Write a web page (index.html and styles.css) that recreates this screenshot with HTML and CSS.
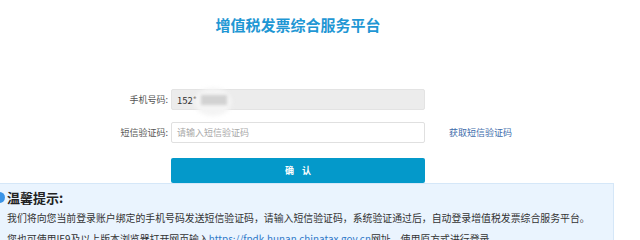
FILE: index.html
```html
<!DOCTYPE html>
<html lang="zh-CN">
<head>
<meta charset="utf-8">
<title>增值税发票综合服务平台</title>
<link rel="stylesheet" href="styles.css">
</head>
<body>
<div class="page">
  <h1 class="title">增值税发票综合服务平台</h1>
  <div class="form">
    <label class="label">手机号码:</label>
    <div class="input input-disabled"><span class="phone">152*</span><span class="blob-halo"></span><span class="blob"></span></div>
    <span></span>
    <label class="label">短信验证码:</label>
    <div class="input"><span class="placeholder">请输入短信验证码</span></div>
    <a class="sms-link">获取短信验证码</a>
    <span></span>
    <button class="btn">确 认</button>
    <span></span>
  </div>
  <div class="tips">
    <span class="dot"></span>
    <div class="tips-title">温馨提示:</div>
    <p class="tips-line">我们将向您当前登录账户绑定的手机号码发送短信验证码，请输入短信验证码，系统验证通过后，自动登录增值税发票综合服务平台。</p>
    <p class="tips-line">您也可使用IE9及以上版本浏览器打开网页输入<a class="tips-link">https://fpdk.hunan.chinatax.gov.cn</a>网址，使用原方式进行登录。</p>
  </div>
</div>
</body>
</html>
```
FILE: styles.css
```css
* { box-sizing: border-box; }
html, body { margin: 0; padding: 0; background: #fff; }
body {
  font-family: "Noto Sans CJK SC", "Noto Sans", sans-serif;
  color: #333;
  width: 640px;
  height: 240px;
  overflow: hidden;
}
.page { display: flex; flex-direction: column; }
.title {
  margin: 16px 0 0 0;
  font-size: 15px;
  line-height: 18px;
  font-weight: bold;
  color: #1f97d4;
  text-align: center;
  padding-right: 44px;
}
.form {
  margin-top: 55px;
  display: grid;
  grid-template-columns: 171px 254px 1fr;
  row-gap: 12px;
  align-items: center;
}
.label {
  font-size: 9px;
  color: #555;
  text-align: right;
  padding-right: 3px;
}
.input {
  position: relative;
  height: 21px;
  border: 1px solid #e0e0e0;
  border-radius: 2px;
  background: #fff;
  display: flex;
  align-items: center;
  padding-left: 5px;
  font-size: 9px;
}
.input-disabled { background: #ececec; border-color: #e3e3e3; }
.phone { color: #333; font-size: 9.5px; }
.blob-halo {
  position: absolute;
  left: 22px;
  top: -2px;
  width: 38px;
  height: 28px;
  border-radius: 50%;
  background: #f4f4f4;
  filter: blur(2px);
}
.blob {
  position: absolute;
  left: 29px;
  top: 5px;
  width: 26px;
  height: 10px;
  background: #d2d2d2;
  filter: blur(1.5px);
}
.placeholder { color: #a8a8a8; }
.sms-link {
  font-size: 9px;
  color: #3e6cab;
  padding-left: 24px;
}
.btn {
  grid-column: 2;
  margin-top: 3px;
  height: 25px;
  border: none;
  border-radius: 2px;
  background: #0499ca;
  color: #fff;
  font-family: "Noto Sans CJK SC", sans-serif;
  font-size: 9px;
  font-weight: bold;
  letter-spacing: 3px;
  padding: 0 0 0 3px;
}
.tips {
  position: relative;
  width: 614px;
  margin-top: 0;
  background: #eaf4fe;
  border-top: 1px solid #d5e7f8;
  border-right: 1px solid #d5e7f8;
  padding: 4px 0 0 7px;
  height: 60px;
}
.dot {
  position: absolute;
  left: -6px;
  top: 8px;
  width: 11px;
  height: 11px;
  border-radius: 50%;
  background: #3b94e6;
}
.tips-title {
  font-size: 13px;
  font-weight: bold;
  line-height: 20px;
  color: #222;
}
.tips-line {
  margin: 0;
  font-size: 9.9px;
  line-height: 21px;
  color: #333;
  white-space: nowrap;
}
.tips-link { color: #2f78c8; }
```
